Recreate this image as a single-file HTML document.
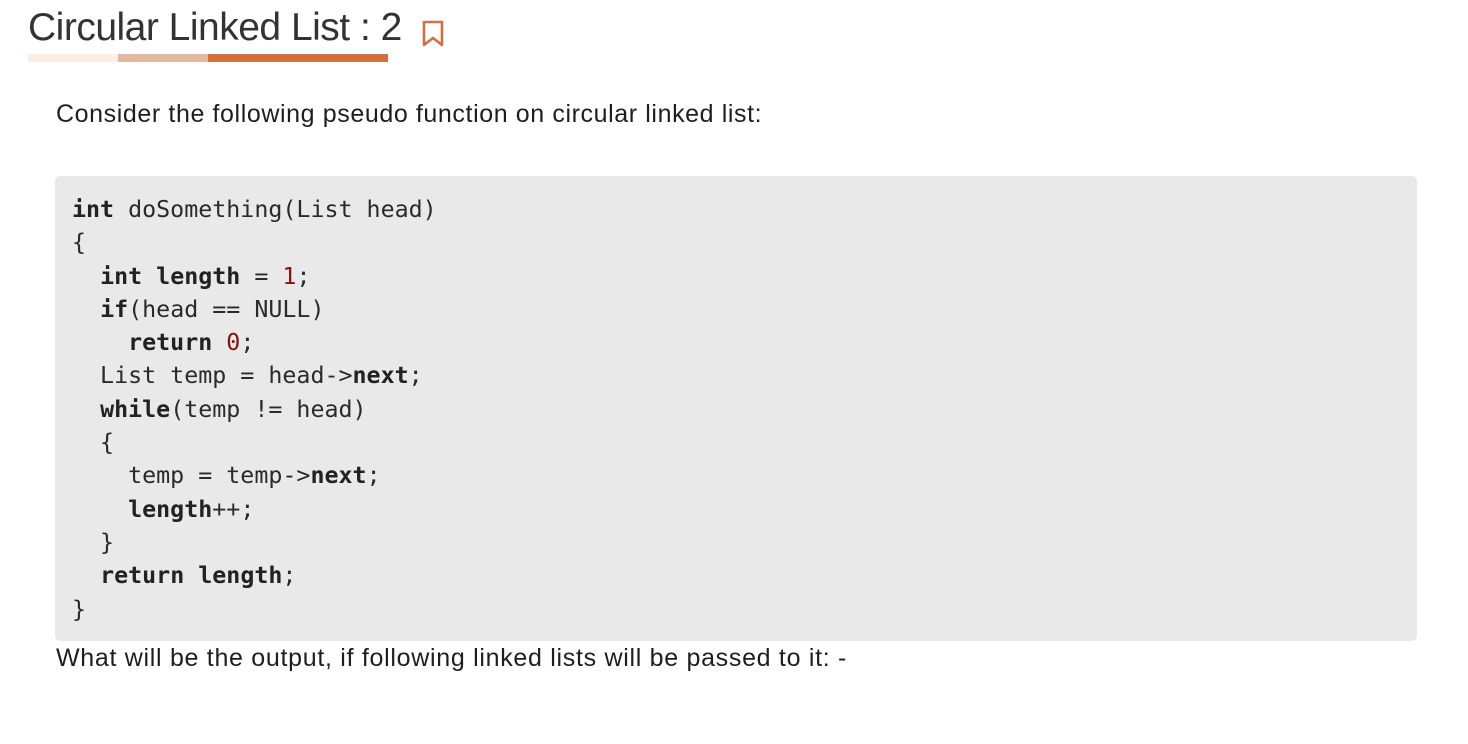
<!DOCTYPE html>
<html><head><meta charset="utf-8"><style>
body{margin:0;background:#fff;width:1468px;height:744px;overflow:hidden;font-family:"Liberation Sans",sans-serif;color:#1e1e1e}
.title{position:absolute;left:28px;top:6px;font-size:39px;color:#333;letter-spacing:-0.5px;white-space:nowrap}
.bar{position:absolute;top:54px;height:8px}
.p{position:absolute;left:56px;font-size:25px;letter-spacing:0.6px;white-space:nowrap}
.code{position:absolute;left:55px;top:176px;width:1362px;height:465px;background:#e9e9e9;border-radius:5px}
pre{margin:0;position:absolute;left:17px;top:17px;font-family:"DejaVu Sans Mono",monospace;font-size:23.3px;line-height:33.3px;color:#2a2a2a}
b{color:#222}
.n{color:#8a1010}
</style></head><body>
<div class="title">Circular Linked List : 2</div>
<svg style="position:absolute;left:422px;top:20px" width="22" height="27" viewBox="0 0 22 27"><path d="M2 2H20V25L11 18L2 25Z" fill="none" stroke="#d06f40" stroke-width="2.6" stroke-linejoin="round"/></svg>
<div class="bar" style="left:28px;width:90px;background:#fbeee6"></div>
<div class="bar" style="left:118px;width:90px;background:#dfb9a0"></div>
<div class="bar" style="left:208px;width:180px;background:#d06f40"></div>
<div class="p" style="top:100px">Consider the following pseudo function on circular linked list:</div>
<div class="code"><pre><b>int</b> doSomething(List head)
{
  <b>int</b> <b>length</b> = <span class="n">1</span>;
  <b>if</b>(head == NULL)
    <b>return</b> <span class="n">0</span>;
  List temp = head-&gt;<b>next</b>;
  <b>while</b>(temp != head)
  {
    temp = temp-&gt;<b>next</b>;
    <b>length</b>++;
  }
  <b>return</b> <b>length</b>;
}</pre></div>
<div class="p" style="top:644px;letter-spacing:0.7px">What will be the output, if following linked lists will be passed to it: -</div>
</body></html>
